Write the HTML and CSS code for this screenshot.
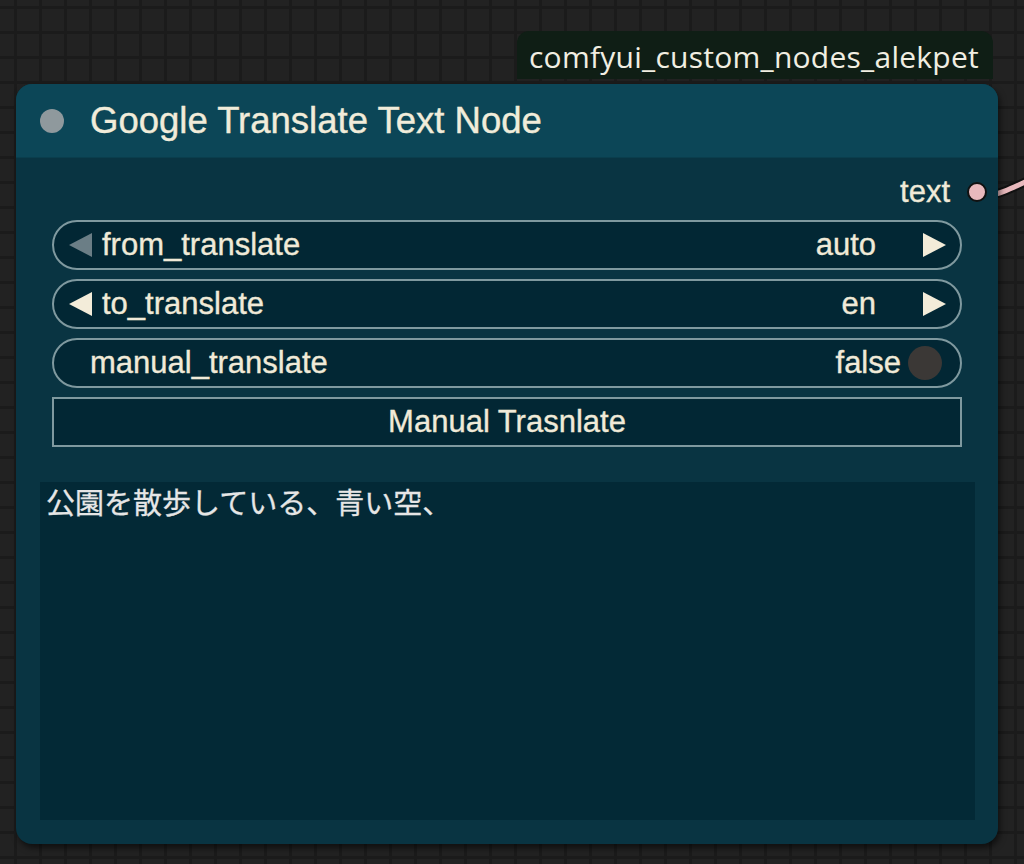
FILE: index.html
```html
<!DOCTYPE html>
<html lang="en">
<head>
<meta charset="utf-8">
<title>Google Translate Text Node</title>
<link rel="stylesheet" href="styles.css">
</head>
<body>
<div class="canvas">
  <svg class="link" width="60" height="60" viewBox="0 0 60 60">
    <path d="M4 48 C 20 46, 34 38, 60 26" fill="none" stroke="#111" stroke-width="9"/>
    <path d="M4 48 C 20 46, 34 38, 60 26" fill="none" stroke="#e8b9bd" stroke-width="5"/>
  </svg>
  <div class="tag">comfyui_custom_nodes_alekpet</div>
  <div class="node">
    <div class="node-title">
      <span class="title-dot"></span>
      <span class="title-text">Google Translate Text Node</span>
    </div>
    <div class="node-body">
      <div class="output-row">
        <span class="output-label">text</span>
        <span class="output-dot"></span>
      </div>
      <div class="widgets">
        <div class="widget combo">
          <span class="arrow left dim"></span>
          <span class="w-label">from_translate</span>
          <span class="w-value">auto</span>
          <span class="arrow right"></span>
        </div>
        <div class="widget combo">
          <span class="arrow left"></span>
          <span class="w-label">to_translate</span>
          <span class="w-value">en</span>
          <span class="arrow right"></span>
        </div>
        <div class="widget toggle">
          <span class="w-label">manual_translate</span>
          <span class="w-value">false</span>
          <span class="knob"></span>
        </div>
        <div class="button">Manual Trasnlate</div>
      </div>
      <div class="textarea">公園を散歩している、青い空、</div>
    </div>
  </div>
</div>
</body>
</html>
```
FILE: styles.css
```css
html, body {
  margin: 0;
  padding: 0;
}
body {
  width: 1024px;
  height: 864px;
  overflow: hidden;
  font-family: "Liberation Sans", Arial, sans-serif;
}
.canvas {
  position: relative;
  width: 1024px;
  height: 864px;
  background-color: #222222;
  background-image:
    linear-gradient(to right, #1b1b1b 0, #1b1b1b 3px, transparent 3px),
    linear-gradient(to bottom, #1b1b1b 0, #1b1b1b 3px, transparent 3px);
  background-size: 25px 25px;
  background-position: 14px 6px;
}
.link {
  position: absolute;
  left: 982px;
  top: 148px;
}
.tag {
  position: absolute;
  left: 517px;
  top: 31px;
  width: 476px;
  height: 48px;
  box-sizing: border-box;
  padding: 0 0 0 12px;
  background: #0f1e15;
  border-radius: 12px 12px 0 0;
  color: #f1eee2;
  font-family: "Open Sans", sans-serif;
  font-size: 30px;
  line-height: 52px;
  white-space: nowrap;
  letter-spacing: 0.25px;
}
.node {
  position: absolute;
  left: 16px;
  top: 84px;
  width: 982px;
  height: 760px;
  border-radius: 16px;
  overflow: hidden;
  background: #093442;
  box-shadow: 2px 4px 6px rgba(0, 0, 0, 0.55);
  display: flex;
  flex-direction: column;
}
.node-title {
  height: 73px;
  flex: none;
  background: #0c4657;
  display: flex;
  align-items: center;
  padding-left: 24px;
  gap: 26px;
  border-bottom: 1px solid #0a3e4d;
}
.title-dot {
  width: 24px;
  height: 24px;
  border-radius: 50%;
  background: #8f999d;
}
.title-text {
  color: #f1ecda;
  font-size: 36.5px;
  line-height: 1;
  padding-top: 2px;
  -webkit-text-stroke: 0.4px #f1ecda;
}
.node-body {
  flex: 1;
  display: flex;
  flex-direction: column;
  padding: 0 23px 24px 24px;
}
.output-row {
  height: 62px;
  display: flex;
  align-items: center;
  justify-content: flex-end;
  gap: 17px;
  margin-right: -12px;
  padding-top: 6px;
  box-sizing: border-box;
}
.output-label {
  color: #f0ead8;
  font-size: 31px;
  -webkit-text-stroke: 0.35px #f0ead8;
}
.output-dot {
  width: 16px;
  height: 16px;
  border-radius: 50%;
  background: #e8b9bd;
  border: 2px solid #111;
}
.widgets {
  display: flex;
  flex-direction: column;
  gap: 9px;
  padding: 0 13px 0 12px;
}
.widget {
  height: 50px;
  box-sizing: border-box;
  border: 2px solid #7f999f;
  border-radius: 25px;
  background: #022734;
  display: flex;
  align-items: center;
  color: #f0ead8;
  font-size: 31px;
  -webkit-text-stroke: 0.35px #f0ead8;
}
.combo {
  padding: 0 14px 0 15px;
}
.toggle {
  padding: 0 18px 0 36px;
}
.w-label {
  flex: 1;
}
.combo .w-label {
  margin-left: 10px;
}
.arrow {
  width: 0;
  height: 0;
  border-top: 12px solid transparent;
  border-bottom: 12px solid transparent;
}
.arrow.left {
  border-right: 23px solid #f3ecd9;
}
.arrow.left.dim {
  border-right-color: #6b7e86;
}
.arrow.right {
  border-left: 23px solid #f3ecd9;
  margin-left: 47px;
}
.knob {
  width: 34px;
  height: 34px;
  border-radius: 50%;
  background: #3b3836;
  margin-left: 7px;
}
.button {
  height: 50px;
  box-sizing: border-box;
  border: 2px solid #7f999f;
  background: #022734;
  color: #f0ead8;
  font-size: 31px;
  -webkit-text-stroke: 0.35px #f0ead8;
  display: flex;
  align-items: center;
  justify-content: center;
}
.textarea {
  flex: 1;
  margin-top: 35px;
  background: #032936;
  color: #e6e6e6;
  font-family: "Liberation Sans", "Noto Sans CJK JP", sans-serif;
  font-size: 29px;
  line-height: 40px;
  padding: 2px 6px;
  -webkit-text-stroke: 0.3px #e6e6e6;
}
```
